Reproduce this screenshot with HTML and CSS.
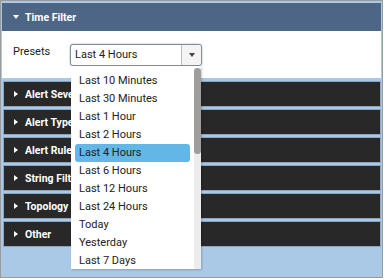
FILE: index.html
```html
<!DOCTYPE html>
<html lang="en">
<head>
    <meta charset="UTF-8">
    <title>Filters</title>
    <link rel="stylesheet" href="styles.css">
</head>
<body>
    <div class="frame">
        <div class="panel-head open"><span class="caret down"></span>Time Filter</div>
        <div class="panel-body">
            <label class="field-label">Presets</label>
            <div class="select">
                <span class="select-value">Last 4 Hours</span>
                <span class="select-btn"><span class="caret down small"></span></span>
            </div>
            <div class="dropdown">
                <ul class="options">
                    <li>Last 10 Minutes</li>
                    <li>Last 30 Minutes</li>
                    <li>Last 1 Hour</li>
                    <li>Last 2 Hours</li>
                    <li class="selected">Last 4 Hours</li>
                    <li>Last 6 Hours</li>
                    <li>Last 12 Hours</li>
                    <li>Last 24 Hours</li>
                    <li>Today</li>
                    <li>Yesterday</li>
                    <li>Last 7 Days</li>
                </ul>
                <div class="scrollbar"><div class="thumb"></div></div>
            </div>
        </div>
        <div class="bars">
            <div class="bar"><span class="caret right"></span>Alert Severity</div>
            <div class="bar"><span class="caret right"></span>Alert Type</div>
            <div class="bar"><span class="caret right"></span>Alert Rule</div>
            <div class="bar"><span class="caret right"></span>String Filter</div>
            <div class="bar"><span class="caret right"></span>Topology</div>
            <div class="bar"><span class="caret right"></span>Other</div>
        </div>
    </div>
</body>
</html>
```
FILE: styles.css
```css
body {
    margin: 0;
    font-family: Roboto, "Liberation Sans", sans-serif;
    font-size: 11px;
    background-color: #ffffff;
}
.frame {
    position: relative;
    width: 381px;
    height: 276px;
    border: 1px solid #9a9a9a;
    background-color: #a9c9e6;
    overflow: hidden;
}
.panel-head {
    display: flex;
    align-items: center;
    height: 28px;
    margin: 0 1px;
    border-top: 2px solid #a9c9e6;
    background-color: #4d6685;
    color: white;
    font-weight: bold;
    font-size: 10.5px;
    padding-left: 11px;
}
.caret {
    display: inline-block;
    width: 0;
    height: 0;
    margin-right: 6px;
}
.caret.down {
    border-left: 3px solid transparent;
    border-right: 3px solid transparent;
    border-top: 4px solid white;
}
.caret.right {
    border-top: 3px solid transparent;
    border-bottom: 3px solid transparent;
    border-left: 4px solid white;
    margin-left: 1px;
    margin-right: 7px;
}
.caret.small {
    border-top-color: #444;
    margin: 0;
}
.panel-body {
    display: flex;
    align-items: flex-start;
    height: 47px;
    margin: 0 1px;
    background-color: white;
    padding-left: 11px;
    box-sizing: border-box;
}
.field-label {
    margin-top: 14px;
    width: 57px;
    color: #222;
}
.select {
    display: flex;
    margin-top: 13px;
    width: 132px;
    height: 22px;
    border: 1px solid #8a8a8a;
    border-radius: 3px;
    box-shadow: 0 0 2px #7fb2e0;
    box-sizing: border-box;
    background-color: white;
}
.select-value {
    flex: 1;
    padding-left: 4px;
    line-height: 20px;
    color: #222;
}
.select-btn {
    display: flex;
    align-items: center;
    justify-content: center;
    width: 19px;
    border-left: 1px solid #bbb;
    background-color: #f4f4f4;
    border-radius: 0 3px 3px 0;
}
.dropdown {
    position: absolute;
    left: 70px;
    top: 65px;
    width: 130px;
    height: 203px;
    background-color: white;
    box-shadow: 1px 1px 2px rgba(0,0,0,0.2);
    display: flex;
    z-index: 2;
}
.options {
    list-style: none;
    margin: 0;
    padding: 6px 0 0 4px;
    flex: 1;
}
.options li {
    height: 18px;
    line-height: 18px;
    padding-left: 4px;
    margin-right: 4px;
    color: #222;
}
.options li.selected {
    background-color: #62b7e6;
    border-radius: 3px;
}
.scrollbar {
    width: 7px;
    background-color: #ececec;
    margin-top: 2px;
}
.thumb {
    height: 86px;
    background-color: #a09d9d;
    border-radius: 4px;
}
.bars {
    display: flex;
    flex-direction: column;
    gap: 2px;
    padding: 3px 1px 0 2px;
}
.bar {
    display: flex;
    align-items: center;
    height: 24px;
    background-color: #282828;
    border: 1px solid #8ea6bd;
    color: white;
    font-weight: bold;
    font-size: 10.5px;
    padding-left: 9px;
    white-space: nowrap;
}
```
